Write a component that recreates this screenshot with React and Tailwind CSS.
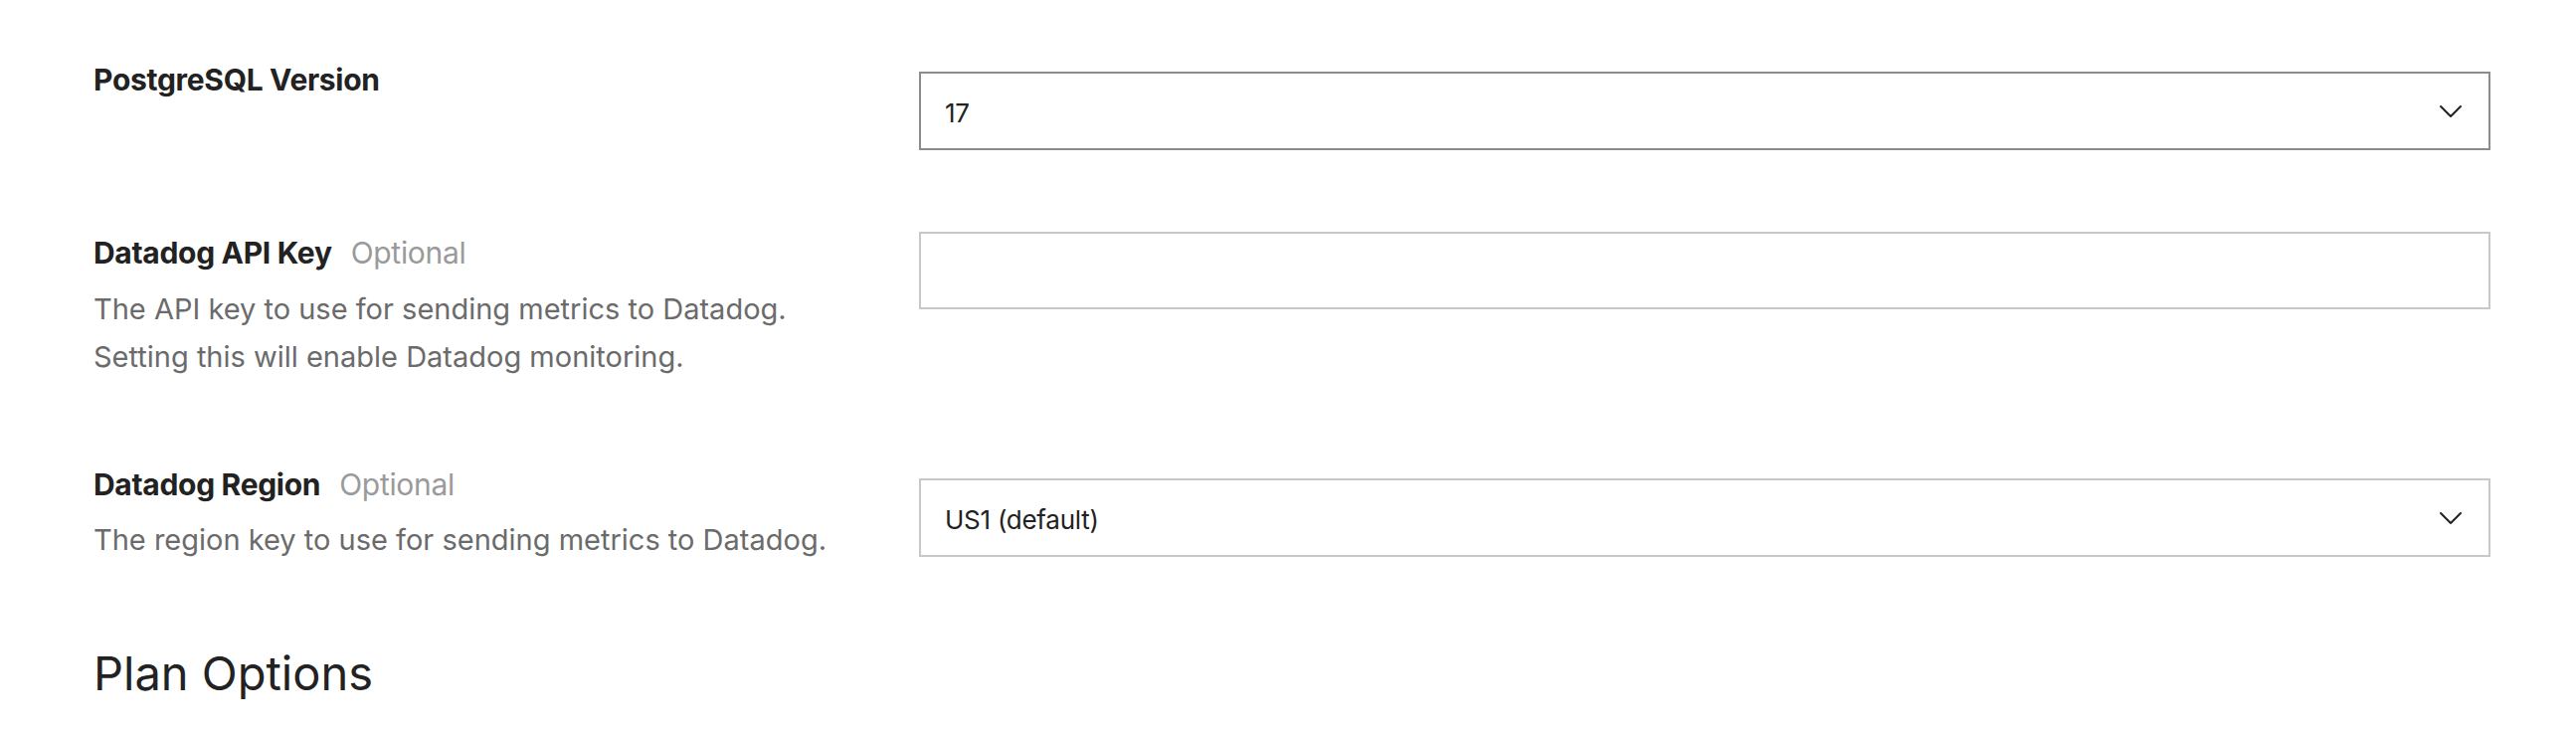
import { ChevronDown } from "lucide-react";

const fieldLabel = "text-[30px] leading-[48px] font-bold tracking-[-0.01em] text-[#222222]";
const fieldHint = "text-[29px] leading-[48px] text-[#6b6b6b] translate-y-[1px]";

const Optional = () => (
  <span className="ml-[19px] font-normal text-[#9a9a9a]">Optional</span>
);

const Select = ({ value, className }) => (
  <div
    className={`flex items-center justify-between h-[79px] border-2 bg-white pl-[24px] pr-[18px] ${className}`}
  >
    <span className="pt-[3px] text-[26px] text-[#222222] tracking-[-0.01em]">{value}</span>
    <ChevronDown className="w-[40px] h-[40px] text-[#222222]" strokeWidth={1.2} />
  </div>
);

export default function App() {
  return (
    <div
      className="min-h-screen bg-white pl-[94px] pr-[86px] pt-[56px]"
      style={{ fontFamily: "Inter, 'Liberation Sans', sans-serif" }}
    >
      <div className="grid grid-cols-[1fr_2fr] gap-x-[40px] items-start">
        <h3 className={fieldLabel}>PostgreSQL Version</h3>
        <Select value="17" className="mt-[16px] border-[#8c8c8c]" />
      </div>

      <div className="grid grid-cols-[1fr_2fr] gap-x-[40px] items-start mt-[79px]">
        <div>
          <h3 className={fieldLabel}>
            Datadog API Key
            <Optional />
          </h3>
          <p className={`${fieldHint} mt-[8px]`}>
            The API key to use for sending metrics to Datadog.
            <br />
            Setting this will enable Datadog monitoring.
          </p>
        </div>
        <input
          type="text"
          className="mt-[3px] h-[78px] border-2 border-[#c8c8c8] bg-white px-[24px] text-[26px] outline-none"
        />
      </div>

      <div className="grid grid-cols-[1fr_2fr] gap-x-[40px] items-start mt-[81px]">
        <div>
          <h3 className={fieldLabel}>
            Datadog Region
            <Optional />
          </h3>
          <p className={`${fieldHint} mt-[7px]`}>
            The region key to use for sending metrics to Datadog.
          </p>
        </div>
        <Select value="US1 (default)" className="mt-[18px] border-[#c8c8c8]" />
      </div>

      <h2 className="mt-[83px] text-[47px] leading-[56px] font-normal text-[#222222]">
        Plan Options
      </h2>
    </div>
  );
}
